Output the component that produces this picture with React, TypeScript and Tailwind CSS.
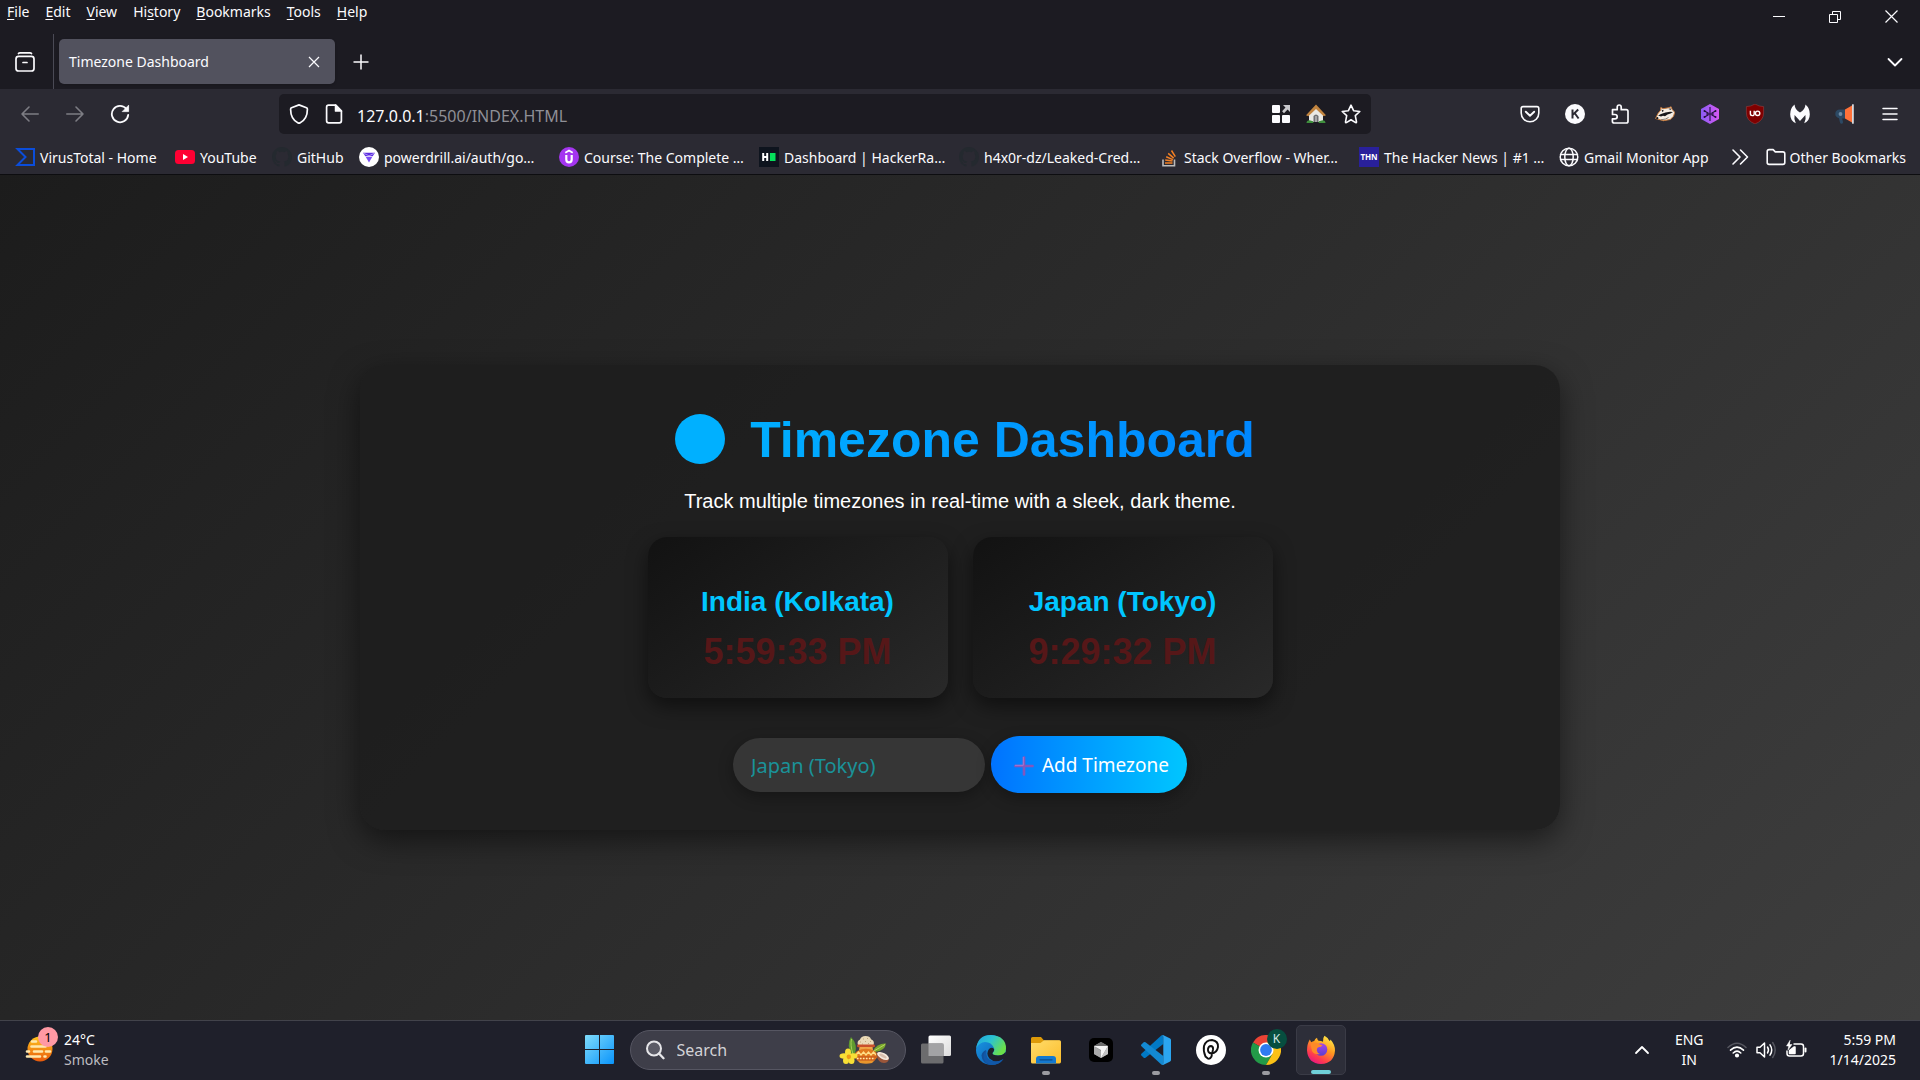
import React, { useState } from "react";
import type { ReactNode } from "react";

const stroke = {
  fill: "none",
  stroke: "currentColor",
  strokeLinecap: "round" as const,
  strokeLinejoin: "round" as const,
};

/* ---------- Browser chrome icons ---------- */

const FirefoxViewIcon = () => (
  <svg viewBox="0 0 20 20" className="h-5 w-5" {...stroke} strokeWidth={1.7}>
    <path d="M3.500 1.600Q4 .9 5 .9h10q1 0 1.500.7" />
    <rect x="1" y="4.300" width="18" height="14.700" rx="2.600" />
    <path d="M8 10.500h4" />
  </svg>
);

const BackIcon = () => (
  <svg viewBox="0 0 20 20" className="h-5 w-5" {...stroke} strokeWidth={1.6}>
    <path d="M18.200 10H2M9 3l-7 7 7 7" />
  </svg>
);

const ForwardIcon = () => (
  <svg viewBox="0 0 20 20" className="h-5 w-5" {...stroke} strokeWidth={1.6}>
    <path d="M1.800 10H18M11 3l7 7-7 7" />
  </svg>
);

const ReloadIcon = () => (
  <svg viewBox="0 0 20 20" className="h-5 w-5" {...stroke} strokeWidth={1.8}>
    <path d="M16.500 5A8.200 8.200 0 1 0 18.200 10.800" />
    <path d="M18.600 1.600v6h-6z" fill="currentColor" strokeWidth={0.8} />
  </svg>
);

const ShieldIcon = () => (
  <svg viewBox="0 0 20 20" className="h-5 w-5" {...stroke} strokeWidth={1.7}>
    <path d="M10 .9 17.500 3.800q.9.4.9 1.400 0 10-7.500 13.700-.9.4-1.800 0Q1.600 15.200 1.600 5.200q0-1 .9-1.400z" />
  </svg>
);

const PageIcon = () => (
  <svg viewBox="0 0 20 20" className="h-5 w-5" {...stroke} strokeWidth={1.7}>
    <path d="M11.600 1.200H4.600Q2.600 1.200 2.600 3.200v13.600q0 2 2 2h10.800q2 0 2-2V7z" />
    <path d="M11.600 1.200V7h5.800z" fill="currentColor" />
  </svg>
);

const GridIcon = () => (
  <svg viewBox="0 0 20 20" className="h-5 w-5" fill="#fbfbfe">
    <rect x="1" y="1" width="8" height="8" rx="1" />
    <rect x="1" y="11" width="8" height="8" rx="1" />
    <rect x="11" y="11" width="8" height="8" rx="1" />
    <path d="M12 1h7v7l-2.400-2.400-3.600 3.600-1.900-1.900L14.500 3.600z" fill="#c9c9cd" />
  </svg>
);

const HouseIcon = () => (
  <svg viewBox="0 0 20 20" className="h-5 w-5">
    <path d="M3 9.500 10 3l7 6.500V18H3z" fill="#e9e9e4" />
    <path d="M0 11.300 10 .6l10 10.700-2.300 1L10 5 2.300 12.300z" fill="#c1843f" />
    <path d="M7.500 18v-6q2.500-3 5 0v6z" fill="#6f7072" />
    <path d="M9 18v-6h2v6z" fill="#a4a5a6" />
    <path d="M.5 19q0-2.600 3-2.800l3.500 1 .5 1.800zM12.500 19l.5-1.800 3.500-1q3 .2 3 2.800z" fill="#3f8f3d" />
  </svg>
);

const StarIcon = () => (
  <svg viewBox="0 0 20 20" className="h-5 w-5" {...stroke} strokeWidth={1.600}>
    <path d="m10 1.200 2.600 5.500 6.200.8-4.500 4.200 1.200 6.200q0 1-.9.700L10 15.700l-4.600 2.900q-.9.300-.9-.7l1.200-6.200L1.200 7.500l6.200-.8z" />
  </svg>
);

const PocketIcon = () => (
  <svg viewBox="0 0 20 20" className="h-5 w-5" {...stroke} strokeWidth={1.6}>
    <path d="M3 2.600h14q1.800 0 1.800 1.800V9A8.800 8.800 0 0 1 1.200 9V4.400Q1.200 2.600 3 2.600z" />
    <path d="M5.800 7.700 10 11.700l4.200-4" strokeWidth={1.900} />
  </svg>
);

const ProfileIcon = () => (
  <svg viewBox="0 0 20 20" className="h-5 w-5">
    <circle cx="10" cy="10" r="10" fill="#fbfbfe" />
    <path d="M7.500 5.500v9M13.200 5.500 8 10.600M9.600 9l4 5.500" stroke="#2b2a33" strokeWidth="2" fill="none" />
  </svg>
);

const PuzzleIcon = () => (
  <svg viewBox="0 0 20 20" className="h-5 w-5" {...stroke} strokeWidth={1.7}>
    <path d="M2.500 8.500V5.700h4.700V3.200q0-2.200 2-2.200t2 2.200v2.500h5q1.800 0 1.800 1.800v9.700q0 1.800-1.800 1.800H4.200q-1.800 0-1.800-1.800v-2.300h2.400q2.400 0 2.400-2.200t-2.400-2.200H2.500z" />
  </svg>
);

const BadgerIcon = () => (
  <svg viewBox="0 0 20 20" className="h-5 w-5">
    <path d="M.6 14.500 3 9.500 5.600 6.200 5.800 3.500l2.300 1.200 5.400-.9 2.600-1 .9 2.500 2.700 3-1.200 4-3.300 3.200-6.800 1.200z" fill="#f4ede4" stroke="#c77a3c" strokeWidth="1" strokeLinejoin="round" />
    <path d="m3 11.500 3-1.500 4.500-1.500 4.500-.8 3 .4-2.500 1.500-3 .9-2.500 1.800-2-.6-2 .9z" fill="#18181b" />
    <path d="M6.500 5.500 9 6.700 7.300 8zM13.500 5l2-.8.5 1.800z" fill="#18181b" />
    <circle cx="2.300" cy="14.200" r="1.100" fill="#18181b" />
    <path d="m6 15.800 4.500-.8 3-1.500" stroke="#6b625a" strokeWidth=".8" fill="none" />
  </svg>
);

const HexIcon = () => (
  <svg viewBox="0 0 20 20" className="h-5 w-5">
    <defs>
      <linearGradient id="hex" x1="0" y1="0" x2="1" y2="0">
        <stop offset="0" stopColor="#8a5cf6" />
        <stop offset="1" stopColor="#d558f2" />
      </linearGradient>
    </defs>
    <path d="M10 0 19 5v10l-9 5-9-5V5z" fill="url(#hex)" />
    <path d="M10 3v14M4.500 7l4 2.300M4.500 13l4-2.300M15.500 7l-4 2.300M15.500 13l-4-2.300M6 10h8" stroke="#22123c" strokeWidth="1.100" fill="none" />
    <g fill="#22123c">
      <circle cx="4.500" cy="7" r="1" />
      <circle cx="4.500" cy="13" r="1" />
      <circle cx="15.500" cy="7" r="1" />
      <circle cx="15.500" cy="13" r="1" />
    </g>
  </svg>
);

const UblockIcon = () => (
  <svg viewBox="0 0 20 20" className="h-5 w-5">
    <path d="M10 0q4 2.600 8.600 2.600V9q0 7.500-8.600 11Q1.400 16.500 1.400 9V2.600Q6 2.600 10 0z" fill="#800000" stroke="#9c4a4a" strokeWidth=".5" />
    <path d="M5.400 6.800v3q0 1.800 1.900 1.800T9.200 9.800v-3" fill="none" stroke="#fff" strokeWidth="1.400" />
    <circle cx="12.600" cy="9.300" r="2.200" fill="none" stroke="#fff" strokeWidth="1.400" />
  </svg>
);

const MalwareIcon = () => (
  <svg viewBox="0 0 20 20" className="h-5 w-5">
    <path d="M4.500.5Q5 6 10 8.500 15 6 15.500.5q4.300 3.800 4.300 9.700 0 6.500-5.600 9 2.200-4 1.200-8.300L10 17 4.600 10.900q-1 4.300 1.200 8.300Q.2 16.700.2 10.200.2 4.300 4.500.5z" fill="#fbfbfe" />
  </svg>
);

const MegaphoneIcon = () => (
  <svg viewBox="0 0 20 20" className="h-5 w-5">
    <path d="M10 5.500 17 1.500v17l-7-4z" fill="#ff7139" />
    <rect x="17" y=".3" width="1.800" height="19.400" fill="#d6d8dc" />
    <path d="M10 5.500v9H7.200L8 18q.3 1.800-1.400 1.800-1.300 0-1.600-1.400l-1-4.100Q.3 13 .3 10 .3 5.500 5 5.500z" fill="#2c4964" />
    <circle cx="5.500" cy="10" r="1.900" fill="#6f8aa3" />
  </svg>
);

const MenuIcon = () => (
  <svg viewBox="0 0 20 20" className="h-5 w-5" {...stroke} strokeWidth={1.500}>
    <path d="M3 4.500h14M3 10h14M3 15.500h14" />
  </svg>
);

/* ---------- Bookmark icons ---------- */

const VirusTotalIcon = () => (
  <svg viewBox="0 0 20 20" className="h-5 w-5">
    <path d="M2.500 2H19v16H2.500l8-8z" fill="none" stroke="#0b4dda" strokeWidth="2" />
  </svg>
);

const YouTubeIcon = () => (
  <svg viewBox="0 0 20 20" className="h-5 w-5">
    <rect y="3" width="20" height="14" rx="3.500" fill="#ff0033" />
    <path d="M8 7v6l5-3z" fill="#fff" />
  </svg>
);

const GitHubIcon = () => (
  <svg viewBox="0 0 16 16" className="h-5 w-5" fill="#24292f">
    <path d="M8 0C3.580 0 0 3.580 0 8c0 3.540 2.290 6.530 5.470 7.590.4.070.55-.17.55-.38v-1.490c-2.010.37-2.530-.49-2.690-.94-.09-.23-.48-.94-.82-1.130-.28-.15-.68-.52-.01-.53.63-.01 1.080.58 1.230.82.72 1.210 1.870.87 2.330.66.07-.52.28-.87.51-1.070-1.780-.2-3.640-.89-3.640-3.950 0-.87.31-1.590.82-2.150-.08-.2-.36-1.020.08-2.120 0 0 .67-.21 2.200.82a7.600 7.600 0 0 1 4 0c1.530-1.040 2.200-.82 2.200-.82.44 1.100.16 1.920.08 2.120.51.56.82 1.270.82 2.150 0 3.070-1.870 3.750-3.650 3.950.29.25.54.73.54 1.480v2.200c0 .21.15.46.55.38A8 8 0 0 0 16 8c0-4.420-3.580-8-8-8z" />
  </svg>
);

const PowerdrillIcon = () => (
  <svg viewBox="0 0 20 20" className="h-5 w-5">
    <circle cx="10" cy="10" r="10" fill="#fff" />
    <path d="M4 5.800h12l-2.300 3.500H6.300z" fill="#5b2be0" />
    <path d="M6.800 10h6.400L10 15.500z" fill="#7a4df5" />
    <path d="m4.500 6.200 5.500 2.600 5.500-2.600" stroke="#c5b4fa" strokeWidth=".8" fill="none" />
  </svg>
);

const UdemyIcon = () => (
  <svg viewBox="0 0 20 20" className="h-5 w-5">
    <circle cx="10" cy="10" r="10" fill="#a435f0" />
    <path d="M6.300 5.800 10 3.600l3.700 2.200" fill="none" stroke="#fff" strokeWidth="1.800" />
    <path d="M7.300 8v4.500q0 2.800 2.700 2.800t2.700-2.800V8" fill="none" stroke="#fff" strokeWidth="2.200" />
  </svg>
);

const HackerRankIcon = () => (
  <svg viewBox="0 0 20 20" className="h-5 w-5">
    <rect width="20" height="20" fill="#0e141e" />
    <path d="M4.200 6v8M8.200 6v8M4.200 10h4" stroke="#fff" strokeWidth="2" />
    <rect x="11" y="6" width="5.500" height="8" fill="#05e05b" />
  </svg>
);

const StackOverflowIcon = () => (
  <svg viewBox="0 0 20 20" className="h-5 w-5" fill="none">
    <path d="M4 12.500V18.800h11.500V12.500" stroke="#bcbbbb" strokeWidth="1.600" />
    <path d="M6 16h7.500M6.200 13l7.300 1M7.200 9.700l6.700 2.900M9.200 6.400l5.500 4.700M12.500 3.500l3.800 6.200" stroke="#f48024" strokeWidth="1.500" />
  </svg>
);

const HackerNewsIcon = () => (
  <span className="flex h-5 w-5 items-center justify-center bg-[#29209b] text-[8px] font-bold leading-none text-white">THN</span>
);

const GlobeIcon = () => (
  <svg viewBox="0 0 20 20" className="h-5 w-5" {...stroke} strokeWidth={1.500}>
    <circle cx="10" cy="10" r="8.800" />
    <ellipse cx="10" cy="10" rx="4.200" ry="8.800" />
    <path d="M1.500 7.500h17M1.500 12.500h17" />
  </svg>
);

const FolderIcon = () => (
  <svg viewBox="0 0 20 20" className="h-5 w-5" {...stroke} strokeWidth={1.600}>
    <path d="M1.200 15.500v-11q0-1.900 1.900-1.900h4l2.200 2.300h7.600q1.900 0 1.900 1.900v8.700q0 1.900-1.900 1.900H3.100q-1.900 0-1.900-1.900z" />
  </svg>
);

/* ---------- Taskbar icons ---------- */

const WeatherIcon = () => (
  <svg viewBox="0 0 30 30" className="h-[30px] w-[30px]">
    <defs>
      <linearGradient id="sun" x1="0" y1="0" x2="0" y2="1">
        <stop offset="0" stopColor="#ffc51f" />
        <stop offset="1" stopColor="#e8590b" />
      </linearGradient>
    </defs>
    <circle cx="16" cy="14" r="12.500" fill="url(#sun)" />
    <g stroke="#ffe9ae" strokeWidth="2.600" strokeLinecap="round">
      <path d="M8 6.500h4M7.500 11.500h14M3 16.500h2M10 16.500h8M22 16.500h4M3 21.500h13M20.500 21.500h1" />
    </g>
  </svg>
);

const WindowsIcon = () => (
  <svg viewBox="0 0 30 30" className="h-[30px] w-[30px]">
    <defs>
      <linearGradient id="win" x1="0" y1="0" x2="1" y2="1">
        <stop offset="0" stopColor="#7fdcfb" />
        <stop offset="1" stopColor="#0a94fb" />
      </linearGradient>
    </defs>
    <path d="M0 1Q0 0 1 0h13v14H0zM15 0h13q1 0 1 1v13H15zM0 15h14v14H1q-1 0-1-1zM15 15h14v13q0 1-1 1H15z" fill="url(#win)" />
  </svg>
);

const MagnifierIcon = () => (
  <svg viewBox="0 0 20 20" className="h-5 w-5" fill="none" stroke="#e6e6e9" strokeWidth="2" strokeLinecap="round">
    <circle cx="9" cy="8.500" r="7" fill="#5b5b66" />
    <path d="m14 13.500 4.500 4.700" strokeWidth="2.300" />
  </svg>
);

const HarvestIcon = () => (
  <svg viewBox="0 0 52 30" className="h-[30px] w-[52px]">
    <path d="M13 20Q7 10 12 2q7 7 4 17z" fill="#5f9a2f" />
    <path d="M14 19Q11 10 12.500 4" stroke="#a8cf58" fill="none" />
    <path d="M34 16q4-8 13-7.500-1 7.500-11 8.500z" fill="#78a82e" />
    <path d="M34 16.500q7-4 12-7" stroke="#b9d75e" fill="none" />
    <path d="M19 10q-1.500-4 2-5.500 1-3.500 5.500-3.500T32 4.300q4 1.500 2.500 5.700z" fill="#ead9b7" />
    <path d="M21 7h1M24 4h1M28 3.500h1M31 6.500h1M26 6.500h1M23 9h1M29 8.500h1" stroke="#bfa67a" />
    <rect x="18" y="9.500" width="18" height="2.800" rx="1.400" fill="#c9502a" />
    <path d="M20.500 12h13l.5 3H20z" fill="#f0a445" />
    <ellipse cx="27" cy="20.500" rx="11.500" ry="6.800" fill="#e07a1e" />
    <path d="M18 25h18l-3 3q-6 1.500-12 0z" fill="#e9952c" />
    <path d="m17 20 2.500-3 2.500 3 2.500-3 2.500 3 2.500-3 2.500 3 2.500-3 2.500 3" stroke="#ffe08a" strokeWidth="1.300" fill="none" />
    <path d="M16.500 22h21M18 25h18" stroke="#b5401a" strokeWidth=".8" />
    <path d="M18 23.500h18" stroke="#ffe9b0" strokeDasharray="1.500 1.500" strokeWidth="1.300" />
    <path d="M37 19q2-3 6-1 5 2 7 6-1 4-5 4-6 0-8-9z" fill="#9a563a" />
    <ellipse cx="44" cy="21" rx="6.500" ry="3" transform="rotate(28 44 21)" fill="#f5e9dd" />
    <ellipse cx="44" cy="21" rx="4" ry="1.500" transform="rotate(28 44 21)" fill="#d8bfae" />
    <g fill="#f8df35">
      <ellipse cx="9" cy="17.500" rx="3" ry="4" />
      <ellipse cx="5" cy="21" rx="4.500" ry="2.800" />
      <ellipse cx="14" cy="21" rx="4.500" ry="2.800" />
      <ellipse cx="7" cy="25.500" rx="3" ry="3.500" />
      <ellipse cx="12.500" cy="25.500" rx="3" ry="3.500" />
    </g>
    <circle cx="9.800" cy="21.700" r="2.200" fill="#ee9a15" />
  </svg>
);

const TaskViewIcon = () => (
  <svg viewBox="0 0 30 30" className="h-[30px] w-[30px]">
    <defs>
      <linearGradient id="tv" x1="0" y1="0" x2="1" y2="1">
        <stop offset="0" stopColor="#ffffff" />
        <stop offset="1" stopColor="#dcdcdc" />
      </linearGradient>
    </defs>
    <rect x="7.500" y=".5" width="22.500" height="20.500" rx="1.500" fill="url(#tv)" />
    <rect x="0" y="8.500" width="22.500" height="20" rx="1.500" fill="#6c6c6e" />
    <path d="M7.500 8.500H22.500V21H7.500z" fill="#a3a3a5" />
  </svg>
);

const EdgeIcon = () => (
  <svg viewBox="0 0 30 30" className="h-[30px] w-[30px]">
    <defs>
      <linearGradient id="edgeTop" x1="0" y1="0" x2="1" y2=".5">
        <stop offset="0" stopColor="#1fa3e0" />
        <stop offset=".5" stopColor="#2cc3d0" />
        <stop offset="1" stopColor="#6be04a" />
      </linearGradient>
      <linearGradient id="edgeLow" x1="0" y1="0" x2="1" y2="1">
        <stop offset="0" stopColor="#1a9be8" />
        <stop offset="1" stopColor="#0b54a8" />
      </linearGradient>
    </defs>
    <circle cx="15" cy="15" r="15" fill="url(#edgeLow)" />
    <path d="M.3 13Q2 0 15 0q15 1 15 13.500 0 7-8 7-6 0-5.500-2.500 2.500-2 1.500-5Q15.500 7 9 7 3.500 7.500.3 13z" fill="url(#edgeTop)" />
    <path d="M10 15q-1.500 11 9 11.500 5 0 8.500-2.500Q23 30 15.500 30 6 29 5.500 20.500q.5-4 4.500-5.500z" fill="#12509b" />
    <path d="M16.500 18q-.5 2.500 5.500 2.500 5 0 7.500-3.500 1 4-2 7-8 5-14-.5-4-4.500-.5-9.500 3-2.500 5 0 .500 2-1.500 4z" fill="#1f202b" />
    <path d="M10.500 15.500q-1.500 10.500 8.500 11 5 0 8.500-2.500Q23.500 29.800 15.500 30 7 28 7.500 20q.5-3 3-4.500z" fill="#1158a8" />
  </svg>
);

const ExplorerIcon = () => (
  <svg viewBox="0 0 30 30" className="h-[30px] w-[30px]">
    <defs>
      <linearGradient id="folder" x1="0" y1="0" x2="1" y2="1">
        <stop offset="0" stopColor="#ffdc6b" />
        <stop offset="1" stopColor="#fcbd2b" />
      </linearGradient>
    </defs>
    <path d="M0 3.500Q0 2 1.500 2H10l3 3.500h15.500V12H0z" fill="#dd9a09" />
    <path d="M0 8h9.500l3.500-2.800h15.500q1.500 0 1.500 1.500v20q0 1.800-1.500 1.800h-27Q0 28.500 0 27z" fill="url(#folder)" />
    <path d="M5 28.500V24q0-3 3-3h14q3 0 3 3v4.500z" fill="#1479cf" />
    <path d="M9 24.800h12" stroke="#0c4c8c" strokeWidth="1.300" strokeLinecap="round" />
  </svg>
);

const CursorIcon = () => (
  <svg viewBox="0 0 24 24" className="h-6 w-6">
    <rect width="24" height="24" rx="5" fill="#000" />
    <path d="m12 4 7 4v8l-7 4-7-4V8z" fill="#8b8b8b" />
    <path d="m12 4 7 4H5z" fill="#6b6b6b" />
    <path d="M5 8v8l7 4v-7z" fill="#a9a9a9" />
    <path d="M5 8h14l-7 12v-8z" fill="#f4f4f4" />
    <path d="M19 8v8l-7 4z" fill="#c4c4c4" />
  </svg>
);

const VSCodeIcon = () => (
  <svg viewBox="0 0 30 30" className="h-[30px] w-[30px]">
    <path d="M22.300 9 4.500 22.700q-1 .7-1.800 0L.4 20.500q-.8-1 0-1.800L20.300.6q1-.7 2 0z" fill="#0179c5" />
    <path d="M22.300 21 4.500 7.300q-1-.7-1.800 0L.4 9.500q-.8 1 0 1.800L20.300 29.400q1 .7 2 0z" fill="#1389d2" />
    <path d="m22.500.2 6.200 3Q30 3.800 30 5v20q0 1.200-1.300 1.800l-6.200 3q-1.300.4-2.200-.4 2 1 2-1.500V2.100q0-2.500-2-1.500.9-.8 2.200-.4z" fill="#2ba5f0" />
  </svg>
);

const SwirlIcon = () => (
  <svg viewBox="0 0 30 30" className="h-[30px] w-[30px]">
    <circle cx="15" cy="15" r="15" fill="#fff" />
    <path
      d="M9.500 21.500Q7 16 8 11q2-6 8-6 6.500 1 6 7-1 6-6.500 6.500-4-.5-3.500-4.500.5-3 3-3 2.500.5 2 3.500l-1.500 7q-1.500 3-4 1.800-2-1.800-2-1.800"
      fill="none"
      stroke="#111"
      strokeWidth="1.900"
      strokeLinecap="round"
    />
  </svg>
);

const ChromeIcon = () => (
  <svg viewBox="0 0 30 30" className="h-[30px] w-[30px]">
    <path d="M15 15 2 7.500A15 15 0 0 1 28 7.500z" fill="#ea4335" />
    <path d="M15 15 2 7.500A15 15 0 0 0 15 30l6.500-11.200z" fill="#239a48" />
    <path d="M15 15h0l6.500 3.800L15 30A15 15 0 0 0 28 7.500H15z" fill="#fbc116" />
    <circle cx="15" cy="15" r="7.500" fill="#fff" />
    <circle cx="15" cy="15" r="5.900" fill="#2f7bf0" />
  </svg>
);

const FirefoxIcon = () => (
  <svg viewBox="0 0 30 30" className="h-[30px] w-[30px]">
    <defs>
      <linearGradient id="fox" x1=".8" y1="0" x2=".2" y2="1">
        <stop offset="0" stopColor="#fff04a" />
        <stop offset=".4" stopColor="#ff9a1f" />
        <stop offset=".75" stopColor="#ff3b4e" />
        <stop offset="1" stopColor="#e3108c" />
      </linearGradient>
      <linearGradient id="foxGlobe" x1="0" y1="0" x2="0" y2="1">
        <stop offset="0" stopColor="#a845e8" />
        <stop offset="1" stopColor="#5b3fd0" />
      </linearGradient>
    </defs>
    <path d="M18.500.7q3.500 1.800 5 5.300 1-.5 1-1.500 4.500 5 4.500 11Q28 28.500 15 29 2 28.500 1 15.500 1 9 3.800 4.500l1.400 2.800q1.300-1 3-1.300Q9 3.800 11 2.800q.200 2 1.500 3 3 .2 4.500 1Q16.500 3 18.500.7z" fill="url(#fox)" />
    <circle cx="15" cy="14.500" r="6.300" fill="url(#foxGlobe)" />
    <path d="M4.500 9q5-2.500 9.500.5l2.500.7q-1 2-4.200 2.100-1.800 1-1.500 3.200.4 2.700 3.200 3.500-5.500 1-8-3z" fill="#ff8a28" />
  </svg>
);

const PlusGlyph = () => (
  <svg viewBox="0 0 20 20" className="h-5 w-5">
    <path d="M8.700 1q0-.8 1.300-.8t1.300.8v7.700H19q.8 0 .8 1.300t-.8 1.300h-7.700V19q0 .8-1.300.8T8.700 19v-7.700H1q-.8 0-.8-1.300T1 8.700h7.700z" fill="#8257bd" />
    <path d="M9.300 1v8.300H1" stroke="#b57fd0" strokeWidth=".8" fill="none" />
  </svg>
);

/* ---------- Data ---------- */

const menus: [string, string, string][] = [
  ["", "F", "ile"],
  ["", "E", "dit"],
  ["", "V", "iew"],
  ["Hi", "s", "tory"],
  ["", "B", "ookmarks"],
  ["", "T", "ools"],
  ["", "H", "elp"],
];

const bookmarks: { label: string; icon: ReactNode; width: string }[] = [
  { label: "VirusTotal - Home", icon: <VirusTotalIcon />, width: "w-[120px]" },
  { label: "YouTube", icon: <YouTubeIcon />, width: "w-[57px]" },
  { label: "GitHub", icon: <GitHubIcon />, width: "w-[47px]" },
  { label: "powerdrill.ai/auth/go…", icon: <PowerdrillIcon />, width: "w-[160px]" },
  { label: "Course: The Complete …", icon: <UdemyIcon />, width: "w-[160px]" },
  { label: "Dashboard | HackerRa…", icon: <HackerRankIcon />, width: "w-[160px]" },
  { label: "h4x0r-dz/Leaked-Cred…", icon: <GitHubIcon />, width: "w-[160px]" },
  { label: "Stack Overflow - Wher…", icon: <StackOverflowIcon />, width: "w-[160px]" },
  { label: "The Hacker News | #1 …", icon: <HackerNewsIcon />, width: "w-[160px]" },
  { label: "Gmail Monitor App", icon: <GlobeIcon />, width: "w-[129px]" },
];

const extensions: { name: string; icon: ReactNode }[] = [
  { name: "Save to Pocket", icon: <PocketIcon /> },
  { name: "Account", icon: <ProfileIcon /> },
  { name: "Extensions", icon: <PuzzleIcon /> },
  { name: "Privacy Badger", icon: <BadgerIcon /> },
  { name: "Hex extension", icon: <HexIcon /> },
  { name: "uBlock Origin", icon: <UblockIcon /> },
  { name: "Malwarebytes", icon: <MalwareIcon /> },
  { name: "Announcements", icon: <MegaphoneIcon /> },
  { name: "Open application menu", icon: <MenuIcon /> },
];

const clocks = [
  { zone: "India (Kolkata)", time: "5:59:33 PM" },
  { zone: "Japan (Tokyo)", time: "9:29:32 PM" },
];

const apps: { name: string; icon: ReactNode; running?: boolean }[] = [
  { name: "Task view", icon: <TaskViewIcon /> },
  { name: "Edge", icon: <EdgeIcon /> },
  { name: "File Explorer", icon: <ExplorerIcon />, running: true },
  { name: "Cursor", icon: <CursorIcon /> },
  { name: "Visual Studio Code", icon: <VSCodeIcon />, running: true },
  { name: "Notes", icon: <SwirlIcon /> },
  {
    name: "Chrome",
    running: true,
    icon: (
      <span className="relative">
        <ChromeIcon />
        <span className="absolute -right-1.5 -top-1.5 flex h-5 w-5 items-center justify-center rounded-full bg-[#064e3f] text-[12px] leading-none text-[#d5e6e1]">K</span>
      </span>
    ),
  },
];

/* ---------- Sections ---------- */

function MenuBar() {
  return (
    <div className="flex h-[33px] items-start justify-between">
      <nav aria-label="Application menu" className="flex gap-4 pl-[7px] pt-0.5 text-[14px] leading-5">
        {menus.map(([before, key, after]) => (
          <button key={before + key + after} type="button">
            {before}
            <u className="underline-offset-2">{key}</u>
            {after}
          </button>
        ))}
      </nav>
      <div className="flex h-[33px] pr-px">
        <button type="button" aria-label="Minimize" className="flex w-14 items-center justify-center">
          <svg viewBox="0 0 12 12" className="h-3 w-3">
            <path d="M0 5.500h12" stroke="currentColor" />
          </svg>
        </button>
        <button type="button" aria-label="Restore" className="flex w-14 items-center justify-center">
          <svg viewBox="0 0 12 12" className="h-3 w-3" fill="none" stroke="currentColor">
            <path d="M.5 3.500h8v8h-8zM3.500 3.500v-3h8v8h-3" />
          </svg>
        </button>
        <button type="button" aria-label="Close window" className="flex w-14 items-center justify-center">
          <svg viewBox="0 0 13 13" className="h-[13px] w-[13px]">
            <path d="m.5.5 12 12m0-12-12 12" stroke="currentColor" strokeWidth="1.200" />
          </svg>
        </button>
      </div>
    </div>
  );
}

function TabStrip() {
  return (
    <div className="flex h-14 items-center pt-px">
      <button type="button" aria-label="Firefox View" className="flex h-full w-[53px] items-center pl-[15px]">
        <FirefoxViewIcon />
      </button>
      <div className="h-full w-px bg-[#4a4a55]" />
      <div className="ml-[5px] flex h-[45px] w-[276px] items-center justify-between rounded-[5px] bg-[#52525e] pl-2.5 pr-[15px] shadow">
        <span className="text-[14px]">Timezone Dashboard</span>
        <button type="button" aria-label="Close tab">
          <svg viewBox="0 0 12 12" className="h-3 w-3">
            <path d="m1 1 10 10m0-10L1 11" stroke="currentColor" strokeWidth="1.200" />
          </svg>
        </button>
      </div>
      <button type="button" aria-label="New tab" className="ml-[18px]">
        <svg viewBox="0 0 16 16" className="h-4 w-4">
          <path d="M.5 8h15M8 .5v15" stroke="currentColor" strokeWidth="1.500" />
        </svg>
      </button>
      <button type="button" aria-label="List all tabs" className="ml-auto mr-[17px]">
        <svg viewBox="0 0 16 16" className="h-4 w-4" {...stroke} strokeWidth={1.800}>
          <path d="m1.500 5 6.500 6.500L14.500 5" />
        </svg>
      </button>
    </div>
  );
}

function NavBar() {
  return (
    <div className="flex h-[50px] items-center pl-[7px] pr-2">
      <div className="flex">
        <button type="button" aria-label="Back" className="flex w-[45px] justify-center text-[#7d7d84]">
          <BackIcon />
        </button>
        <button type="button" aria-label="Forward" className="flex w-[45px] justify-center text-[#7d7d84]">
          <ForwardIcon />
        </button>
        <button type="button" aria-label="Reload" className="flex w-[45px] justify-center">
          <ReloadIcon />
        </button>
      </div>
      <div className="ml-[137px] mr-[136px] flex h-10 flex-1 items-center rounded-[5px] bg-[#1c1b22] px-2.5">
        <ShieldIcon />
        <span className="ml-[15px]">
          <PageIcon />
        </span>
        <div className="ml-[13px] flex-1 pt-[3px] text-[16px] leading-6 text-[#8f8f96]">
          <span className="text-[#fbfbfe]">127.0.0.1</span>:5500/INDEX.HTML
        </div>
        <div className="flex gap-[15px]">
          <button type="button" aria-label="Apps">
            <GridIcon />
          </button>
          <button type="button" aria-label="Home">
            <HouseIcon />
          </button>
          <button type="button" aria-label="Bookmark this page">
            <StarIcon />
          </button>
        </div>
      </div>
      <div className="flex">
        {extensions.map((e) => (
          <button key={e.name} type="button" aria-label={e.name} className="flex w-[45px] justify-center">
            {e.icon}
          </button>
        ))}
      </div>
    </div>
  );
}

function BookmarksBar() {
  return (
    <div className="flex h-[36px] items-center justify-between border-b border-[#0d0d10] pl-[15px] pr-[14px] pt-px text-[14px]">
      <div className="flex gap-[15px]">
        {bookmarks.map((b) => (
          <a key={b.label} href="#" className="flex items-center gap-[5px]">
            <span className="shrink-0">{b.icon}</span>
            <span className={`${b.width} whitespace-nowrap`}>{b.label}</span>
          </a>
        ))}
      </div>
      <div className="flex items-center gap-[17px]">
        <button type="button" aria-label="More bookmarks">
          <svg viewBox="0 0 18 18" className="h-[18px] w-[18px]" {...stroke} strokeWidth={1.600}>
            <path d="m2 2 7 7-7 7M9.500 2l7 7-7 7" />
          </svg>
        </button>
        <button type="button" className="flex items-center gap-1">
          <FolderIcon />
          Other Bookmarks
        </button>
      </div>
    </div>
  );
}

function Dashboard() {
  const [zone, setZone] = useState("Japan (Tokyo)");
  return (
    <main className="flex flex-1 items-center justify-center bg-linear-135 from-[#1c1c1c] to-[#3e3e3e] font-['Liberation_Sans',Arial,sans-serif]">
      <section className="w-full max-w-[1200px] rounded-[25px] bg-[#1e1e1e]/90 px-[50px] pb-[37px] pt-[47px] text-center shadow-[0_10px_30px_rgba(0,0,0,0.5)]">
        <h1 className="flex items-center justify-center bg-linear-to-r from-[#00c6ff] to-[#0072ff] bg-clip-text text-[50px] font-bold leading-[56px] text-transparent">
          <span className="mb-0.5 ml-2.5 mr-[25px] h-[50px] w-[50px] rounded-full bg-[#00b0ff]" />
          Timezone Dashboard
        </h1>
        <p className="mt-[21px] text-[20px] leading-6 text-white">Track multiple timezones in real-time with a sleek, dark theme.</p>
        <div className="mt-6 flex flex-wrap justify-center gap-[25px]">
          {clocks.map((c) => (
            <article
              key={c.zone}
              className="w-[300px] rounded-[19px] bg-linear-145 from-[#121212] to-[#292929] pb-[26px] pt-[49px] font-bold shadow-[0_8px_20px_rgba(0,0,0,0.5)]"
            >
              <h2 className="text-[28px] leading-8 text-[#00c6ff]">{c.zone}</h2>
              <p className="mt-3.5 text-[36px] leading-10 text-[#561718]">{c.time}</p>
            </article>
          ))}
        </div>
        <form
          className="mt-[38px] flex items-center justify-center gap-1.5 font-['Noto_Sans',sans-serif] text-[19px]"
          onSubmit={(e) => e.preventDefault()}
        >
          <input
            type="text"
            aria-label="Timezone"
            value={zone}
            onChange={(e) => setZone(e.target.value)}
            className="h-[54px] w-[252px] rounded-full bg-[#363636] px-[18px] pt-0.5 text-[20px] text-[#1a9299] shadow-[0_5px_15px_rgba(0,0,0,0.3)] outline-none"
          />
          <button
            type="submit"
            className="flex h-[57px] w-[196px] items-center justify-end gap-2 whitespace-nowrap rounded-full bg-linear-to-r from-[#0072ff] to-[#00c6ff] pr-[18px] pt-0.5 text-white shadow-[0_5px_15px_rgba(0,0,0,0.3)]"
          >
            <PlusGlyph />
            Add Timezone
          </button>
        </form>
      </section>
    </main>
  );
}

function Taskbar() {
  return (
    <footer className="grid h-[60px] grid-cols-[1fr_auto_1fr] items-center border-t border-[#42434b] bg-[#1f202b] pb-px text-[14px] text-white">
      <button type="button" className="flex items-center pl-6 text-left">
        <span className="relative">
          <WeatherIcon />
          <span className="absolute -right-1 -top-2 flex h-5 w-5 items-center justify-center rounded-full bg-[#ff99a4] text-[13px] leading-none text-black">1</span>
        </span>
        <span className="ml-2.5 leading-5">
          <span className="block">24°C</span>
          <span className="block text-[#bcbcc0]">Smoke</span>
        </span>
      </button>
      <div className="flex items-center gap-[5px]">
        <button type="button" aria-label="Start" className="flex h-[50px] w-[50px] items-center justify-center">
          <WindowsIcon />
        </button>
        <label className="flex h-10 w-[276px] items-center rounded-full border border-[#565662] bg-[#3e3e49] pl-3.5 pr-3.5">
          <MagnifierIcon />
          <input
            type="text"
            aria-label="Search"
            placeholder="Search"
            className="ml-3 w-0 flex-1 bg-transparent text-[16px] outline-none placeholder:text-[#d3d3d7]"
          />
          <HarvestIcon />
        </label>
        {apps.map((a) => (
          <button key={a.name} type="button" aria-label={a.name} className="relative flex h-[50px] w-[50px] items-center justify-center">
            {a.icon}
            {a.running && <span className="absolute bottom-0 h-1 w-2 rounded-full bg-[#9b9ba1]" />}
          </button>
        ))}
        <button
          type="button"
          aria-label="Firefox"
          className="relative flex h-[50px] w-[50px] items-center justify-center rounded-[5px] border border-[#3a3b46] bg-[#2d2e39]"
        >
          <FirefoxIcon />
          <span className="absolute bottom-0 h-1 w-5 rounded-full bg-[#6fd0d8]" />
        </button>
      </div>
      <div className="flex items-center justify-end pr-6">
        <button type="button" aria-label="Show hidden icons">
          <svg viewBox="0 0 16 16" className="h-4 w-4" {...stroke} strokeWidth={1.800}>
            <path d="m2 11 6-6 6 6" />
          </svg>
        </button>
        <button type="button" className="ml-[25px] text-center leading-5">
          <span className="block">ENG</span>
          <span className="block">IN</span>
        </button>
        <button type="button" aria-label="Network, volume and battery" className="ml-[23px] flex items-center gap-[9px]">
          <svg viewBox="0 0 20 20" className="h-5 w-5" {...stroke} strokeWidth={1.600}>
            <path d="M1 7.500q9-8.500 18 0" stroke="#55565f" />
            <path d="M3.500 10.200q6.500-6.200 13 0M6.200 13q3.800-3.600 7.600 0" />
            <circle cx="10" cy="15.500" r="1.300" fill="currentColor" />
          </svg>
          <svg viewBox="0 0 20 20" className="h-5 w-5" {...stroke} strokeWidth={1.500}>
            <path d="M1 7.300h3L8.500 3v14L4 12.700H1z" />
            <path d="M11.500 7q2 3 0 6M14 4.800q3.500 5.200 0 10.400" />
            <path d="M16.700 2.500q5 7.500 0 15" stroke="#55565f" />
          </svg>
          <svg viewBox="0 0 22 20" className="h-5 w-[22px]" {...stroke} strokeWidth={1.500}>
            <path d="M9 4h7q2.500 0 2.500 2.500v7Q18.500 16 16 16H4.500Q2 16 2 13.500V11" />
            <path d="M20.500 8.500v3" strokeWidth="2" />
            <path d="M4.500 13.500v-3L9 7h1v6.500z" fill="currentColor" />
            <path d="M5 .5 1.500 6h2.200L3 10l4-5.500H4.700z" fill="currentColor" strokeWidth=".5" />
          </svg>
        </button>
        <button type="button" className="ml-[23px] text-right leading-5">
          <time className="block">5:59 PM</time>
          <time className="block">1/14/2025</time>
        </button>
      </div>
    </footer>
  );
}

export default function App() {
  return (
    <div className="flex min-h-screen flex-col font-['Noto_Sans','Open_Sans',sans-serif] text-[#fbfbfe]">
      <header>
        <div className="bg-[#1c1b22]">
          <MenuBar />
          <TabStrip />
        </div>
        <div className="bg-[#2b2a33]">
          <NavBar />
          <BookmarksBar />
        </div>
      </header>
      <Dashboard />
      <Taskbar />
    </div>
  );
}
